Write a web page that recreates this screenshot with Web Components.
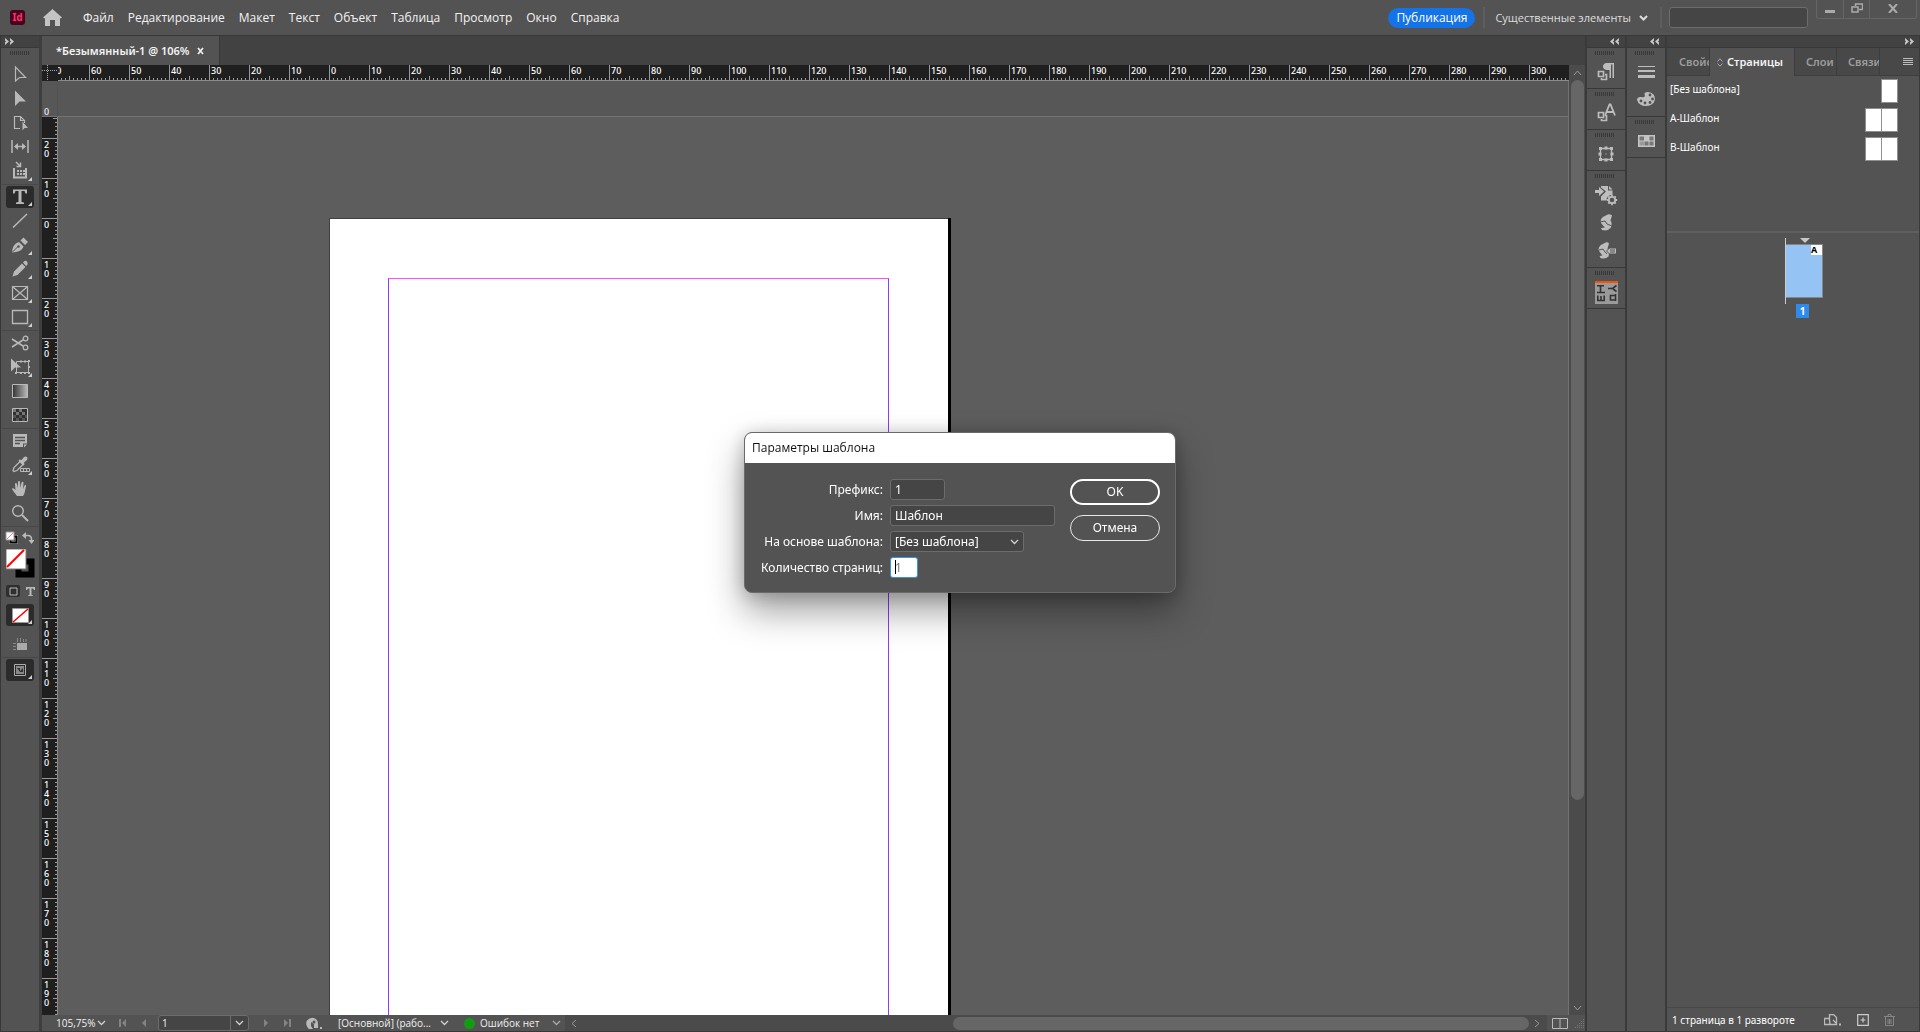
<!DOCTYPE html>
<html lang="ru">
<head>
<meta charset="utf-8">
<title>Безымянный-1</title>
<style>
html,body{height:100%;margin:0;overflow:hidden;background:#535353}
body{font:12px/16px "Noto Sans","Open Sans",sans-serif;color:#f0f0f0}
</style>
</head>
<body>
<id-app></id-app>
<script>
const BASE = `*{box-sizing:border-box}
:host{display:block;min-width:0;min-height:0}
svg{display:block;flex:none}
button,input,select{font:inherit;color:inherit;margin:0}
button{background:none;border:0;padding:0;display:flex;align-items:center;justify-content:center}
.grip{height:4px;background:repeating-linear-gradient(90deg,#383838 0 1px,transparent 1px 2px)}`;

function define(name, css, html, setup) {
  const t = document.createElement('template');
  t.innerHTML = `<style>${BASE}${css}</style>${html}`;
  customElements.define(name, class extends HTMLElement {
    connectedCallback() {
      if (this.shadowRoot) return;
      const root = this.attachShadow({mode: 'open'});
      root.append(t.content.cloneNode(true));
      if (setup) setup(root, this);
    }
  });
}
const svg = (w, h, body) => `<svg width="${w}" height="${h}" viewBox="0 0 ${w} ${h}" fill="none" stroke="none" aria-hidden="true">${body}</svg>`;
const chev = (c = '#d0d0d0') => svg(9, 6, `<path d="M1 1l3.5 3.5L8 1" stroke="${c}" stroke-width="1.3"/>`);
const dbl = flip => svg(9, 7, `<path ${flip ? 'transform="matrix(-1 0 0 1 9 0)"' : ''} d="M0 0l4 3.5L0 7V4.500L1 3.500 0 2.500zM5 0l4 3.500L5 7V4.500l1-1-1-1z" fill="#c8c8c8"/>`);

/* ---------- menu bar ---------- */
define('id-menubar', `
:host{background:#535353;border-bottom:1px solid #383838;font-family:"Open Sans","Noto Sans",sans-serif}
header{display:flex;align-items:center;height:35px}
.logo{margin-left:10px}
.home{margin-left:18px}
nav{display:flex;gap:14px;margin-left:21px;flex:1}
nav button{color:#f2f2f2}
.pub{height:20px;padding:0 8px;border-radius:10px;background:#1473e6;color:#fff}
.sep{width:2px;height:21px;background:#5e5e5e}
.pub+.sep{margin-left:8px}
.ws{gap:8px;margin:0 12px 0 10px;color:#dedede;font-size:11px}
input{width:139px;height:21px;margin:0 8px 0 7px;background:#454545;border:1px solid #6c6c6c;border-radius:3px}
.win{display:flex;align-self:flex-start;height:19px;margin-right:3px;border:1px solid #656565;border-top:0;border-radius:0 0 3px 3px}
.win button{width:26px;padding-bottom:2px;border-left:1px solid #656565}
.win button:first-child{border-left:0}
.win button:last-child{width:47px}
`, `<header>
<span class="logo">${svg(15,15,'<rect width="15" height="15" rx="3" fill="#49021f"/><text x="7.500" y="11" text-anchor="middle" font-size="10" font-weight="bold" fill="#ff3366" font-family="Noto Sans">Id</text>')}</span>
<button class="home" aria-label="Главная">${svg(19,17,'<path d="M9.500 0L19 8.500 17.500 9.500 17 9v8h-5v-6H7v6H2V9l-.5.500L0 8.500z" fill="#c4c4c4"/>')}</button>
<nav><button>Файл</button><button>Редактирование</button><button>Макет</button><button>Текст</button><button>Объект</button><button>Таблица</button><button>Просмотр</button><button>Окно</button><button>Справка</button></nav>
<button class="pub">Публикация</button>
<i class="sep"></i>
<button class="ws">Существенные элементы ${svg(9,6,'<path d="M1 1l3.500 3.500L8 1" stroke="#ddd" stroke-width="2"/>')}</button>
<i class="sep"></i>
<input type="search" aria-label="Поиск">
<div class="win">
<button aria-label="Свернуть">${svg(10,10,'<path d="M0 7h10v3H0z" fill="#aaa"/>')}</button>
<button aria-label="Восстановить">${svg(12,10,'<path d="M4.500 3V1h7v5.500H8M1 4h6v5H1z" stroke="#aaa" stroke-width="1.500"/>')}</button>
<button aria-label="Закрыть">${svg(10,9,'<path d="M1 0l8 9M9 0L1 9" stroke="#aaa" stroke-width="2"/>')}</button>
</div></header>`);

/* ---------- tool box ---------- */
const tools = [
 ['Выделение', '<path d="M7.500 4v14l4-3.500h6z" stroke="#b9b9b9" stroke-width="1.200"/>'],
 ['Частичное выделение', '<path d="M7 3.500V19l4.500-4.500H18z" fill="#b9b9b9"/>'],
 ['Страница', '<path d="M12 17.500H6.500v-12h6l4 4V12M12.500 5.500v4h4" stroke="#b9b9b9" stroke-width="1.200"/><path d="M14.500 10.500v9l2-2.500H20z" fill="#b9b9b9"/>'],
 ['Зазор', '<path d="M4 5v13M20 5v13M7 11.500h10" stroke="#b9b9b9" stroke-width="1.500"/><path d="M6 11.500l4-3.500v7zM18 11.500L14 8v7z" fill="#b9b9b9"/>'],
 ['Сборщик содержимого', '<path d="M6 9v9.500h12V9" stroke="#b9b9b9" stroke-width="2"/><path d="M8 3l4 4M12.500 3.500V7.500H8.500" stroke="#b9b9b9" stroke-width="1.500"/><path d="M9 11h2v2H9zm3 0h2v2h-2zm3 0h2v2h-2zM9 14h2v2H9zm3 0h2v2h-2zm3 0h2v2h-2z" fill="#b9b9b9"/>', 1],
 0,
 ['Текст', '<path d="M5 4.500h14v4h-1.500L16.500 6h-3v11l2.500.500V19H8v-1.500l2.500-.500V6h-3L6.500 8.500H5z" fill="#b9b9b9"/>', 1, 1],
 ['Линия', '<path d="M5 18.500L19 5" stroke="#b9b9b9" stroke-width="1.500"/>'],
 ['Перо', '<path d="M4 19.500c.3-5 2-9 7-10.500l4.500 4.500C14 18 10 19 4 19.500z" fill="#b9b9b9"/><path d="M12.500 7.500l3-3 4.500 4.500-3 3z" fill="#b9b9b9"/><path d="M4.500 19l5-5" stroke="#535353"/><circle cx="10.500" cy="13.500" r="1.300" fill="#535353"/>', 1],
 ['Карандаш', '<path d="M4.500 19.500l1.500-5 8-8 3.500 3.500-8 8zM15 5.500l1.500-1.500q1.500-.500 2.500.500t.500 3L18 9z" fill="#b9b9b9"/>', 1],
 ['Прямоугольный фрейм', '<path d="M4.500 5.500h15v13h-15zM5 6l14 12M19 6L5 18" stroke="#b9b9b9" stroke-width="1.200"/>', 1],
 ['Прямоугольник', '<path d="M4.500 5.500h15v13h-15z" stroke="#b9b9b9" stroke-width="1.300"/>', 1],
 0,
 ['Ножницы', '<path d="M4 8l11 7M4 16l11-7" stroke="#b9b9b9" stroke-width="1.600"/><circle cx="17.500" cy="7.500" r="2.300" stroke="#b9b9b9" stroke-width="1.300"/><circle cx="17.500" cy="16.500" r="2.300" stroke="#b9b9b9" stroke-width="1.300"/>'],
 ['Свободное трансформирование', '<path d="M8.500 6.500h12v11h-12z" stroke="#b9b9b9"/><path d="M12 5.500h2v2h-2zm4 0h2v2h-2zM20 5h2v2h-2zm0 6h2v2h-2zm0 6h2v2h-2zm-4 0h2v2h-2zm-4 0h2v2h-2zM7 17h2v2H7z" fill="#b9b9b9"/><path d="M3 3.500v13l4-4h6z" fill="#b9b9b9"/>', 1],
 ['Градиент', '<defs><linearGradient id="g"><stop stop-color="#333"/><stop offset="1" stop-color="#bbb"/></linearGradient></defs><path d="M4.500 5.500h15v13h-15z" fill="url(#g)" stroke="#b9b9b9"/>'],
 ['Растушевка градиента', '<path d="M4.500 5.500h15v13h-15z" fill="#303030" stroke="#b9b9b9"/><path d="M5 6h3v3H5zm6 0h3v3h-3zM8 9h3v3H8zm6 0h3v3h-3z" fill="#777"/><path d="M5 12h3v3H5zm6 0h3v3h-3zm-3 3h3v3H8zm6 0h3v3h-3zm3-3h2v3h-2z" fill="#555"/>'],
 0,
 ['Заметка', '<path d="M5 5h14v9.500h-4V18H5z" fill="#b9b9b9"/><path d="M16 15.500h3l-3 3z" fill="#b9b9b9"/><path d="M7 8.500h10M7 11.500h10M7 14.500h5" stroke="#535353" stroke-width="1.300"/>'],
 ['Пипетка', '<path d="M5 17.500l1-3 6-6 3 3-6 6-3 1z" stroke="#b9b9b9" stroke-width="1.300"/><path d="M11.500 6.500l2 .500 2.500-3q2-1 3 0t0 3l-3 2.500.500 2-1 1-5-5z" fill="#b9b9b9"/><path d="M12.500 15.500h9v3h-9zm3 0v3m3-3v3" stroke="#b9b9b9"/>', 1],
 ['Рука', '<path d="M9 19c-2-3-4-5-5-7 0-1.500 2-1 3.500 1L7 7c0-1.500 1.500-1.500 2 0l1 4V5c0-1.500 2-1.500 2 0l.5 6 1-5.500c.5-1.200 2-1 2 .5l-.5 6 1.500-3.500c1-1 2-.500 1.500 1C17 13 17 16.500 15 19z" fill="#b9b9b9"/>'],
 ['Масштаб', '<circle cx="10" cy="10" r="5.300" stroke="#b9b9b9" stroke-width="1.400"/><path d="M14 14l6 6" stroke="#b9b9b9" stroke-width="2"/>'],
 0];
define('id-toolbox', `
:host{display:flex;flex-direction:column;background:#535353;border-left:1px solid #383838;border-right:3px solid #3e3e3e}
.head{height:12px;background:#424242;border-bottom:1px solid #383838;padding:2px 4px}
.grip{width:20px;margin:3px auto 8px 9px}
.list{display:flex;flex-direction:column}
.tool{height:24px;width:28px;margin-left:5px;border-radius:3px;position:relative}
.on{background:#2b2b2b;height:22px;margin-top:1px;margin-bottom:1px}
.fly::after{content:"";position:absolute;right:2px;bottom:2px;border:2px solid;border-color:transparent #d0d0d0 #d0d0d0 transparent}
hr{width:36px;height:1px;border:0;margin:1px 0 0 1px;background:#484848}
.row{display:flex;justify-content:space-between;padding:0 5px 0 4px;margin-top:4px}
.fs{width:29px;margin:5px 0 0 5px}
.mode{display:flex;margin:7px 0 6px 5px;gap:3px}
.mode button{width:14px;height:12px;border-radius:2px}
.mode .sel{background:#2f2f2f}
.view{margin-top:5px}
`, `<div class="head">${dbl()}</div><div class="grip"></div><div class="list">${tools.map(t => t ? `<button class="tool${t[2] ? ' fly' : ''}${t[3] ? ' on' : ''}" aria-label="${t[0]}">${svg(24,24,t[1])}</button>` : '<hr>').join('')}</div>
<div class="row"><button aria-label="По умолчанию">${svg(13,13,'<path d="M5.500 5.500h6v6h-6z" stroke="#b9b9b9" stroke-width="3"/><path d="M5.500 5.500h6v6h-6z" stroke="#000" stroke-width="2"/><path d="M1 1h8v8H1z" fill="#fff" stroke="#999"/><path d="M1.500 8.500l7-7" stroke="#e88"/>')}</button><button aria-label="Поменять">${svg(12,12,'<path d="M2 3.500h4q3.500 0 3.500 4V9" stroke="#b9b9b9" stroke-width="1.600"/><path d="M0 3.500L4 0v7zM6.500 8h6l-3 4z" fill="#b9b9b9"/>')}</button></div>
<button class="fs" aria-label="Заливка и обводка">${svg(29,29,'<path d="M12.500 12.500h13v13h-13z" stroke="#000" stroke-width="6"/><path d="M0 0h20v20H0z" fill="#fff" stroke="#777"/><path d="M1 18L18 1" stroke="#f00" stroke-width="2"/>')}</button>
<div class="mode"><button class="sel" aria-label="Контейнер">${svg(9,9,'<path d="M1 1h7v7H1z" stroke="#b9b9b9"/>')}</button><button aria-label="Форматирование текста">${svg(9,9,'<path d="M0 0h9v3H8L7 1.500H5.500V8L7 8.500V9H2v-.500L3.500 8V1.500H2L1 3H0z" fill="#b9b9b9"/>')}</button></div>
<button class="tool fly on" aria-label="Без цвета">${svg(17,15,'<path d="M.5.500h16v14H.5z" fill="#fff" stroke="#999"/><path d="M1 14L16 1" stroke="#f00" stroke-width="1.600"/>')}</button>
<button class="tool view" aria-label="Режим просмотра">${svg(14,12,'<path d="M4 5h10v7H4z" fill="#aaa"/><path d="M4.500 0v4M7.500 0v4M10.500 1v3M13 1v3M0 5.500h3M0 8.500h3M0 11.500h3" stroke="#888"/>')}</button>
<hr>
<button class="tool fly on" aria-label="Экран">${svg(12,12,'<path d="M.5.500h11v11H.5z" stroke="#aaa"/><path d="M2 2h8v8H2z" fill="#888"/><path d="M3 4h3v3l3-3v4H6z" fill="#333"/>')}</button>`);

/* ---------- rulers ---------- */
define('id-ruler', `
:host{overflow:hidden;background:#1f1f1f;font-size:9px;line-height:9px;font-weight:500;color:#fff}
:host([vertical]){border-right:1px solid #8a8a8a}
:host(:not([vertical])){border-bottom:1px solid #8a8a8a}
.h{display:flex;margin-left:-9px}
.h span{flex:none;width:40px;height:15px;padding:1px 0 0 2px;
background:linear-gradient(#999,#999) 0 0/1px 15px no-repeat,linear-gradient(#999,#999) 20px 11px/1px 4px no-repeat,repeating-linear-gradient(90deg,#999 0 1px,transparent 1px 4px) 0 13px/40px 2px no-repeat}
.v{display:flex;flex-direction:column}
.v span{flex:none;height:40px;padding:2px 0 0 2px;white-space:pre;
background:linear-gradient(#999,#999) 0 0/15px 1px no-repeat,linear-gradient(#999,#999) 11px 20px/4px 1px no-repeat,repeating-linear-gradient(#999 0 1px,transparent 1px 4px) 13px 0/2px 40px no-repeat}
.v span:first-child{height:21px;background-position:0 -40px,11px 1px,13px -19px}
`, '<div></div>', (root, el) => {
  const v = el.hasAttribute('vertical'), box = root.querySelector('div');
  box.className = v ? 'v' : 'h';
  if (v) box.append(document.createElement('span'));
  for (let n = v ? -20 : -70; n <= (v ? 190 : 300); n += 10) {
    const s = document.createElement('span');
    s.textContent = v ? [...String(Math.abs(n))].join('\n') : Math.abs(n);
    box.append(s);
  }
});

/* ---------- document window ---------- */
define('id-document', `
:host{display:grid;grid-template-rows:29px 16px 36px 1fr 16px;grid-template-columns:16px 1fr 16px;background:#4b4b4b}
.tabs{grid-column:1/-1;background:#424242;display:flex}
.tab{display:flex;align-items:center;gap:8px;padding:0 15px 0 14px;background:#535353;border-right:1px solid #383838;font-size:11px;font-weight:600;color:#f4f4f4}
.corner{background:#1f1f1f}
.zero{display:flex;align-items:flex-end;background:#575757;font-size:9px;line-height:8px;font-weight:500;padding-left:2px;border-right:1px solid #515151;border-bottom:1px solid #727272}
.board{background:#575757;border-bottom:1px solid #727272;border-right:1px solid #727272}
.canvas{background:#5d5d5d;border-right:1px solid #727272;position:relative;overflow:hidden}
.page{position:absolute;left:271px;top:101px;width:619px;bottom:-40px;background:#fff;border:1px solid #404040;border-right:0;box-shadow:3px 0 0 #000}
.margin{position:absolute;left:58px;right:59px;top:59px;bottom:0;border:1px solid #8f3bff;border-top-color:#ff4dff}
.vs{grid-column:3;grid-row:2/5;display:flex;flex-direction:column;align-items:center;padding:5px 0 4px}
.vs i{width:13px;flex:0 1 720px;border-radius:7px;background:#666;margin:4px 0 auto}
id-statusbar{grid-column:1/-1}
`, `<div class="tabs"><div class="tab"><span>*Безымянный-1 @ 106%</span><button aria-label="Закрыть документ">${svg(7,8,'<path d="M1 1l5 6M6 1L1 7" stroke="#eee" stroke-width="1.800"/>')}</button></div></div>
<div class="corner">${svg(16,16,'<path d="M5.500 0v16M0 5.500h16" stroke="#aaa" stroke-dasharray="1 1"/>')}</div><id-ruler></id-ruler>
<div class="vs"><button aria-label="Вверх">${svg(9,6,'<path d="M1 5l3.500-4L8 5" stroke="#999"/>')}</button><i></i><button aria-label="Вниз">${svg(9,6,'<path d="M1 1l3.500 4L8 1" stroke="#999"/>')}</button></div>
<div class="zero">0</div><div class="board"></div>
<id-ruler vertical></id-ruler>
<div class="canvas"><div class="page"><div class="margin"></div></div></div>
<id-statusbar></id-statusbar>`);

/* ---------- status bar ---------- */
define('id-statusbar', `
:host{display:flex;align-items:center;background:#535353;font:10px/14px "Open Sans","Noto Sans",sans-serif;padding-left:14px}
.zoom{width:56px;justify-content:space-between;padding-right:6px}
.nav{width:21px}
.pg{display:flex;width:91px;height:16px;margin:0 6px 0 4px;border:1px solid #6c6c6c;border-radius:3px;background:#454545}
.pg input{flex:1;min-width:0;border:0;background:none;padding:0 3px}
.pg button{width:18px;border-left:1px solid #6c6c6c}
.mode{width:111px;justify-content:space-between;margin-left:15px}
.err{width:97px;margin-left:15px;justify-content:flex-start}
.err i{width:11px;height:11px;border-radius:50%;background:#139c13;margin-right:5px}
.err svg{margin-left:auto}
.cloud{margin-left:8px}
.hs{flex:1;display:flex;align-items:center;justify-content:space-between;height:16px;margin-left:4px;padding:0 7px 0 6px;background:#4b4b4b}
.hs i{width:576px;height:13px;border-radius:7px;background:#666;margin:0 5px 0 auto}
.split{margin:0 5px 0 5px}
`, `<button class="zoom">105,75% ${chev()}</button>
<button class="nav" aria-label="Первая страница">${svg(8,8,'<path d="M0 0h2v8H0zM7 0v8L3 4z" fill="#838383"/>')}</button>
<button class="nav" aria-label="Предыдущая страница">${svg(8,8,'<path d="M6 0v8L2 4z" fill="#838383"/>')}</button>
<div class="pg"><input value="1" aria-label="Страница"><button aria-label="Выбрать страницу">${chev()}</button></div>
<button class="nav" aria-label="Следующая страница">${svg(8,8,'<path d="M2 0v8l4-4z" fill="#838383"/>')}</button>
<button class="nav" aria-label="Последняя страница">${svg(8,8,'<path d="M6 0h2v8H6zM1 0v8l4-4z" fill="#838383"/>')}</button>
<button class="cloud" aria-label="Открыть">${svg(18,13,'<path d="M3 11Q0 7 2 3.500 5 0 9 1q4 1.500 4 6v4H9V7L6 5v4l2 3H4z" fill="#b9b9b9"/><circle cx="9" cy="5" r="1.500" fill="#535353"/><path d="M15 10h2v2h-2z" fill="#b9b9b9"/>')}</button>
<button class="mode">[Основной] (рабо... ${chev()}</button>
<button class="err"><i></i>Ошибок нет ${chev('#aaa')}</button>
<div class="hs"><button aria-label="Влево">${svg(6,9,'<path d="M5 1L1 4.500 5 8" stroke="#999"/>')}</button><i></i><button aria-label="Вправо">${svg(6,9,'<path d="M1 1l4 3.500L1 8" stroke="#999"/>')}</button></div>
<button class="split" aria-label="Разделить">${svg(16,11,'<path d="M.5.500h15v10H.5zM8 0v11" stroke="#b9b9b9"/>')}</button>
${svg(12,12,'<path d="M2 10.500h10M4 8.500h8M6 6.500h6M8 4.500h4M10 2.500h2" stroke="#777" stroke-dasharray="1 1"/>')}`);

/* ---------- icon docks ---------- */
const ico = {
 para: ['Стили абзацев', '<path d="M10 1h8v15h-1.500V2.500H15V16h-1.500V8H10.500Q7 7 7 4.500T10 1z" fill="#bdbdbd"/><path d="M2.500 9.500h5v5h-5z" stroke="#bdbdbd" stroke-width="1.700"/><path d="M9 12.500h1.500v5h-5V16" stroke="#bdbdbd" stroke-width="1.700"/>'],
 char: ['Стили символов', '<path d="M9 12.500L13.500 1.500h1l4.500 11M10.500 9h7" stroke="#bdbdbd" stroke-width="1.800"/><path d="M2.500 9.500h5v5h-5z" stroke="#bdbdbd" stroke-width="1.700"/><path d="M9 12.500h1.500v5h-5V16" stroke="#bdbdbd" stroke-width="1.700"/>'],
 trans: ['Трансформирование', '<path d="M4.500 4.500h11v11h-11z" stroke="#bdbdbd" stroke-width="1.300"/><path d="M3 3h3v3H3zm5.500-.5h3v3h-3zM14 3h3v3h-3zM2.500 8.500h3v3h-3zm12 0h3v3h-3zM3 14h3v3H3zm5.500.5h3v3h-3zm5.500-.5h3v3h-3zM9.500 9.500h1v1h-1z" fill="#bdbdbd"/>'],
 imp: ['Импорт', '<path d="M-1 5h4V2l5 4.500L3 11V8h-4z" fill="#bdbdbd"/><path d="M5 1h7v4.500h4.500v4.500q-6 0-6 5.500H5V11.500l5-5-5-4z" fill="#bdbdbd"/><path d="M13 1l3.500 3.500H13z" fill="#bdbdbd"/><circle cx="16" cy="15" r="3.200" stroke="#bdbdbd" stroke-width="1.800"/><path d="M16 9.800v2M16 18.200v2M10.800 15h2M19.200 15h2M12.300 11.300l1.500 1.500M18.200 17.200l1.500 1.500M19.700 11.300l-1.500 1.500M13.800 17.200l-1.500 1.500" stroke="#bdbdbd" stroke-width="1.800"/>'],
 sc: ['Сценарии', '<path d="M9 3q4-3 7-.500l-1.500 5q2 3 .500 7-3 4-9 2.500l-1-2 4-.500Q5 11 4.500 8.500 5 4 9 3z" fill="#bdbdbd"/><path d="M4 9l5-1 2 3 5 2" stroke="#535353" stroke-width="1"/>'],
 scl: ['Метка сценария', '<path d="M7 3q4-3 6-.500l-1.500 5 2 2-1 6q-3 3-8 1.500l-1-2 3-.500Q3 11 2.500 8.500 3 4 7 3z" fill="#bdbdbd"/><path d="M3 9l4-1 2 3 2 2" stroke="#535353"/><path d="M10.500 10l3-3h7v6h-7z" fill="#bdbdbd" stroke="#535353"/><path d="M14 9h5M14 11h5" stroke="#535353"/>'],
 stroke: ['Обводка', '<path d="M2 4.500h17" stroke="#bdbdbd"/><path d="M2 9h17" stroke="#bdbdbd" stroke-width="2"/><path d="M2 14.500h17" stroke="#bdbdbd" stroke-width="3"/>'],
 pal: ['Цвет', '<path d="M1 10q0-3 4-3 3 1 4-1Q7 2 12 2q7 1 7 7-1 7-9 7-7 0-9-6z" fill="#bdbdbd"/><g fill="#535353"><circle cx="14" cy="5" r="1.400"/><circle cx="16.500" cy="9" r="1.400"/><circle cx="14" cy="12.500" r="1.400"/><circle cx="9" cy="13" r="1.400"/><circle cx="5" cy="11" r="1.400"/></g>'],
 sw: ['Образцы', '<path d="M2 4h17v12H2z" fill="#c4c4c4"/><path d="M3.500 5.500H8V9.500H3.500zM13.500 5.500H17.500v4H13.500zM8.500 10.500h4v4h-4zM13.500 10.500h4v4h-4z" fill="#777"/><path d="M3.500 10.500H8v4H3.500z" fill="#999"/>']
};
define('id-dock', `
:host{display:flex;flex-direction:column;background:#535353;border-left:2px solid #3a3a3a}
.head{display:flex;justify-content:flex-end;height:12px;padding:2px 6px;background:#424242;border-bottom:1px solid #383838}
`, `<div class="head">${dbl(1)}</div><slot></slot>`);
define('id-dock-group', `
:host{border-bottom:1px solid #383838;padding:3px 8px 0}
.grip{width:20px}
.i{display:flex;flex-direction:column;align-items:center;padding:7px 0 5px}
button{height:20px;width:20px;margin-bottom:8px}
button:last-child{margin-bottom:1px}
button svg{overflow:visible}
`, '<div class="grip"></div><div class="i"></div>', (root, el) => {
  root.querySelector('.i').innerHTML = el.getAttribute('icons').split(' ').map(k => k === 'type'
    ? `<button aria-label="TypeTool">${svg(23,23,'<path d="M0 0h23v23H0z" fill="#9a9a9a"/><path d="M0 0h23v2H0z" fill="#f4510b"/><path d="M2 4.800h7M5.500 5v6M2 11.500h8M2.800 14.500V20M6 15v5M9.200 14.500V20M2 19.500h8M13 7.500h4.500M21.500 4.500l-4 3 4 3M20.500 13v7M20.500 19h-5v-4.500h5" stroke="#333" stroke-width="1.600"/>')}</button>`
    : `<button aria-label="${ico[k][0]}">${svg(20,20,ico[k][1])}</button>`).join('');
});

/* ---------- pages panel ---------- */
define('id-pages', `
:host{display:flex;flex-direction:column;background:#535353;border-left:2px solid #3a3a3a;border-right:1px solid #3a3a3a;font-size:10px;line-height:14px;color:#fff}
.head{display:flex;justify-content:flex-end;height:12px;padding:2px 5px;background:#424242;border-bottom:1px solid #383838}
.tabs{display:flex;height:28px;background:#484848;font-size:11px;font-weight:600}
.tabs button{color:#9c9c9c;border-right:1px solid #3e3e3e;border-bottom:1px solid #3e3e3e;overflow:hidden;justify-content:flex-start;white-space:nowrap}
.tabs button.on{background:#535353;color:#f4f4f4;border-bottom:0;gap:4px}
.tabs .menu{flex:1;border-right:0;justify-content:flex-end;padding-right:6px}
.masters{height:157px;border-bottom:2px solid #5f5f5f;padding:2px 21px 0 3px}
.m{display:flex;justify-content:space-between;height:25px;margin-bottom:4px;align-items:center}
.m span{margin-bottom:3px}
.th{display:flex;border:1px solid #8f8f8f;background:#8f8f8f;gap:1px}
.th i{width:15px;height:22px;background:#fff}
.spread{flex:1;display:flex;flex-direction:column;align-items:center;padding:5px 0 0 22px}
.sp{display:flex;height:66px;border-left:1px solid #ccc;flex-direction:column}
.sp svg{margin:0 auto 1px}
.pg{width:37px;height:54px;background:#95c3f4;border:1px solid #858585;border-left:0;display:flex;justify-content:flex-end;align-items:flex-start}
.pg b{width:11px;height:10px;background:#fff;color:#000;font-size:9px;line-height:10px;text-align:left}
.num{width:13px;height:14px;margin-right:3px;background:#2d8ceb;font-weight:700;text-align:center}
footer{display:flex;align-items:center;height:24px;border-top:1px solid #484848;padding:0 24px 0 5px}
footer span{flex:1}
footer button{margin-left:15px}
`, `<div class="head">${dbl()}</div>
<div class="tabs"><button style="width:43px;padding-left:12px">Свойства</button><button class="on" style="width:85px;padding-left:7px">${svg(6,9,'<path d="M.5 3.500L3 .8l2.500 2.700M.5 5.500L3 8.200l2.500-2.700" stroke="#aaa"/>')}Страницы</button><button style="width:42px;padding-left:11px">Слои</button><button style="width:43px;padding-left:11px">Связи</button><button class="menu" aria-label="Меню">${svg(10,8,'<path d="M0 .5h10M0 2.500h10M0 4.500h10M0 6.500h10" stroke="#bbb"/>')}</button></div>
<div class="masters"><div class="m"><span>[Без шаблона]</span><div class="th"><i></i></div></div><div class="m"><span>A-Шаблон</span><div class="th"><i></i><i></i></div></div><div class="m"><span>B-Шаблон</span><div class="th"><i></i><i></i></div></div></div>
<div class="spread"><div class="sp">${svg(10,5,'<path d="M0 0h10L5 5z" fill="#c8c8c8"/>')}<div class="pg"><b>A</b></div></div><div class="num">1</div></div>
<footer><span>1 страница в 1 развороте</span>
<button aria-label="Размер страницы">${svg(18,12,'<path d="M6 10.500H.5v-6H6M5.500 6V.500h4l3 3v7H6zM9 6l3 3" stroke="#bbb" stroke-width="1.300"/><path d="M15 9.500h2v2h-2z" fill="#bbb"/>')}</button>
<button aria-label="Новая страница">${svg(12,12,'<path d="M.7.700h10.600v10.600H.7zM6 3.500v5M3.500 6h5" stroke="#ccc" stroke-width="1.200"/>')}</button>
<button aria-label="Удалить">${svg(11,12,'<path d="M0 2.500h11M4 2V.500h3V2M1.500 3v8.500h8V3M4 5v5M5.500 5v5M7 5v5" stroke="#858585"/>')}</button></footer>`);

/* ---------- dialog ---------- */
define('id-master-dialog', `
:host{position:fixed;inset:0;display:grid;place-items:center;padding-bottom:7px}
form{width:432px;border-radius:8px;background:#535353;border:1px solid #6a6a6a;overflow:hidden;box-shadow:0 18px 36px rgba(0,0,0,.38),0 2px 18px rgba(0,0,0,.2);color:#fff}
h1{margin:0;height:30px;padding:0 7px;background:#fff;color:#111;font:400 12px/30px "Open Sans","Noto Sans",sans-serif}
.body{display:flex;justify-content:space-between;padding:16px 15px 14px 7px}
.f{display:grid;grid-template-columns:131px auto;gap:5px 7px;justify-items:start;align-items:center}
label{justify-self:end;white-space:nowrap}
input,select{height:21px;background:#454545;border:1px solid #6c6c6c;border-radius:3px;padding:0 4px}
select{appearance:none;width:134px}
.wrap{display:grid;align-items:center}
.wrap>*{grid-area:1/1}
.wrap svg{justify-self:end;margin-right:5px;pointer-events:none}
#p{width:55px}
#m{width:165px}
#n{width:28px;border:1px solid #3a92f0;color:#777;background:linear-gradient(#000,#000) 4px 2px/1px 14px no-repeat,#fff}
.b{display:flex;flex-direction:column;gap:10px}
.b button{width:90px;height:26px;border:1px solid #e8e8e8;border-radius:13px}
.b .ok{border:2px solid #fff}
`, `<form role="dialog" aria-labelledby="t"><h1 id="t">Параметры шаблона</h1><div class="body"><div class="f">
<label for="p">Префикс:</label><input id="p" value="1">
<label for="m">Имя:</label><input id="m" value="Шаблон">
<label for="b">На основе шаблона:</label><div class="wrap"><select id="b"><option>[Без шаблона]</option></select>${chev()}</div>
<label for="n">Количество страниц:</label><input id="n" value="1"></div>
<div class="b"><button type="button" class="ok">OK</button><button type="button">Отмена</button></div></div></form>`);

/* ---------- application ---------- */
define('id-app', `
:host{display:grid;height:100vh;grid-template-rows:36px 1fr;border-bottom:1px solid #383838;box-sizing:border-box}
main{display:grid;grid-template-columns:42px 1fr 40px 40px 255px;min-height:0}
`, `<id-menubar></id-menubar><main><id-toolbox></id-toolbox><id-document></id-document>
<id-dock><id-dock-group icons="para"></id-dock-group><id-dock-group icons="char"></id-dock-group><id-dock-group icons="trans"></id-dock-group><id-dock-group icons="imp sc scl"></id-dock-group><id-dock-group icons="type"></id-dock-group></id-dock>
<id-dock><id-dock-group icons="stroke pal"></id-dock-group><id-dock-group icons="sw"></id-dock-group></id-dock>
<id-pages></id-pages></main><id-master-dialog></id-master-dialog>`);
</script>
</body>
</html>
